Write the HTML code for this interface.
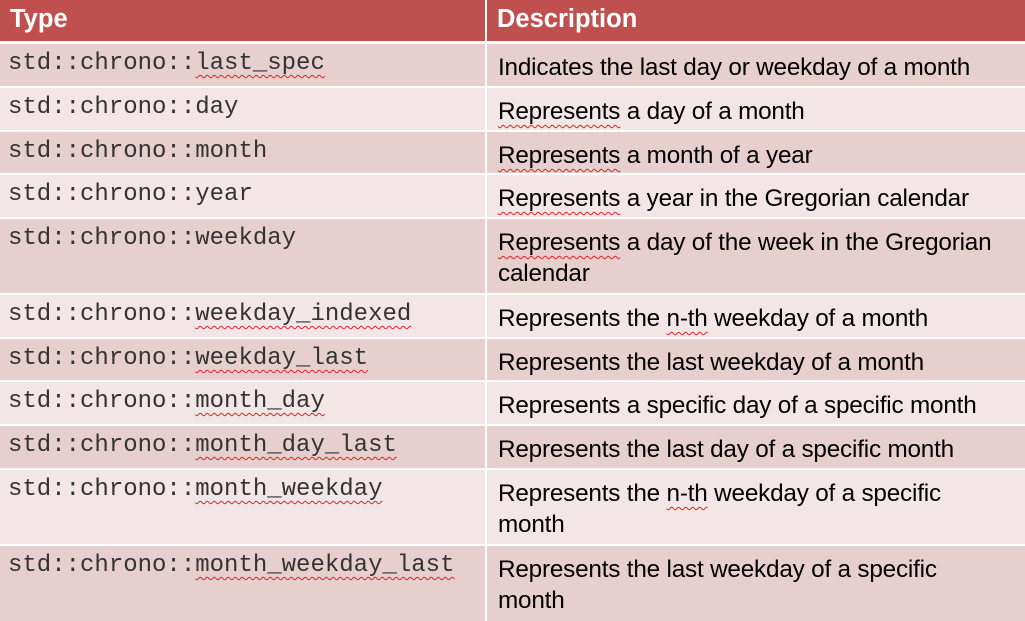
<!DOCTYPE html><html><head><style>
body{margin:0;width:1025px;height:621px;background:#fff;position:relative;overflow:hidden}
.c{position:absolute;box-sizing:border-box;padding:6px 0 0 10px;line-height:31px}
.m{font-family:"Liberation Mono",monospace;font-size:24px;color:#333;padding-left:8px;line-height:30px;padding-top:5px}
.d{font-family:"Liberation Sans",sans-serif;font-size:24.3px;color:#000;padding-left:11px;padding-top:8px;letter-spacing:-0.2px}
.h{background:#C0504D;color:#fff;font-family:"Liberation Sans",sans-serif;font-weight:bold;font-size:25.5px;padding-top:4px}
.a{background:#E8CFCF}.b{background:#F2E7E6}
u{text-decoration:underline wavy #e02020;text-decoration-thickness:1px;text-underline-offset:5px}
</style></head><body>
<div class="c h" style="left:0;top:0;width:485px;height:41px">Type</div>
<div class="c h" style="left:487px;top:0;width:538px;height:41px">Description</div>
<div class="c m a" style="left:0;top:44px;width:485px;height:42px">std::chrono::<u>last_spec</u></div>
<div class="c d a" style="left:487px;top:44px;width:538px;height:42px">Indicates the last day or weekday of a month</div>
<div class="c m b" style="left:0;top:88px;width:485px;height:42px">std::chrono::day</div>
<div class="c d b" style="left:487px;top:88px;width:538px;height:42px"><u>Represents</u> a day of a month</div>
<div class="c m a" style="left:0;top:132px;width:485px;height:41px">std::chrono::month</div>
<div class="c d a" style="left:487px;top:132px;width:538px;height:41px"><u>Represents</u> a month of a year</div>
<div class="c m b" style="left:0;top:175px;width:485px;height:42px">std::chrono::year</div>
<div class="c d b" style="left:487px;top:175px;width:538px;height:42px"><u>Represents</u> a year in the Gregorian calendar</div>
<div class="c m a" style="left:0;top:219px;width:485px;height:74px">std::chrono::weekday</div>
<div class="c d a" style="left:487px;top:219px;width:538px;height:74px"><u>Represents</u> a day of the week in the Gregorian calendar</div>
<div class="c m b" style="left:0;top:295px;width:485px;height:42px">std::chrono::<u>weekday_indexed</u></div>
<div class="c d b" style="left:487px;top:295px;width:538px;height:42px">Represents the <u>n-th</u> weekday of a month</div>
<div class="c m a" style="left:0;top:339px;width:485px;height:41px">std::chrono::<u>weekday_last</u></div>
<div class="c d a" style="left:487px;top:339px;width:538px;height:41px">Represents the last weekday of a month</div>
<div class="c m b" style="left:0;top:382px;width:485px;height:42px">std::chrono::<u>month_day</u></div>
<div class="c d b" style="left:487px;top:382px;width:538px;height:42px">Represents a specific day of a specific month</div>
<div class="c m a" style="left:0;top:426px;width:485px;height:42px">std::chrono::<u>month_day_last</u></div>
<div class="c d a" style="left:487px;top:426px;width:538px;height:42px">Represents the last day of a specific month</div>
<div class="c m b" style="left:0;top:470px;width:485px;height:74px">std::chrono::<u>month_weekday</u></div>
<div class="c d b" style="left:487px;top:470px;width:538px;height:74px">Represents the <u>n-th</u> weekday of a specific<br>month</div>
<div class="c m a" style="left:0;top:546px;width:485px;height:75px">std::chrono::<u>month_weekday_last</u></div>
<div class="c d a" style="left:487px;top:546px;width:538px;height:75px">Represents the last weekday of a specific<br>month</div>
</body></html>
